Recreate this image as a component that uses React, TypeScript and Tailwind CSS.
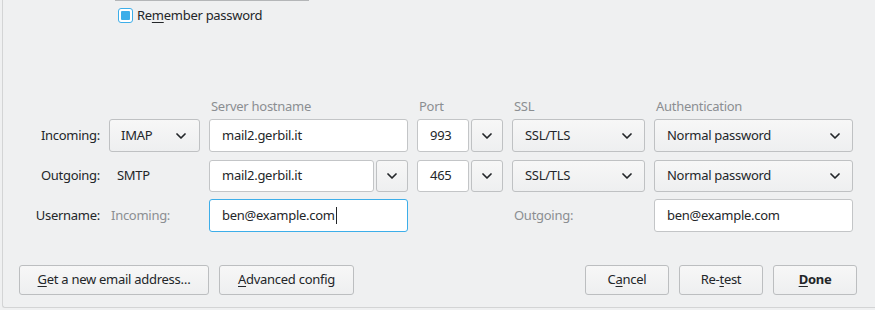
import React from 'react'

const font = { fontFamily: '"Noto Sans", "Open Sans", sans-serif' }

const Chevron = () => (
  <svg width="10" height="6" viewBox="0 0 10 6" fill="none">
    <path d="M1 1l4 4 4-4" stroke="#232629" strokeWidth="1.7" strokeLinecap="round" strokeLinejoin="round" />
  </svg>
)

const Select = ({ value, className = '' }: { value: string; className?: string }) => (
  <div className={`h-full flex items-center justify-between bg-gradient-to-b from-[#f7f7f7] to-[#eeeff0] border border-[#bfc1c3] rounded-[3px] pr-[12px] ${className}`}>
    <span>{value}</span>
    <Chevron />
  </div>
)

const Input = ({ value, focused = false, caret = false }: { value: string; focused?: boolean; caret?: boolean }) => (
  <div className={`h-full flex items-center bg-white rounded-[3px] pl-[12px] border ${focused ? 'border-[#3daee9]' : 'border-[#c3c5c7]'}`}>
    <span>{value}</span>
    {caret && <span className="w-px h-[17px] bg-[#232629] ml-px" />}
  </div>
)

const DropButton = () => (
  <div className="h-full w-[32px] flex items-center justify-center bg-gradient-to-b from-[#f7f7f7] to-[#eeeff0] border border-[#bfc1c3] rounded-[3px]">
    <Chevron />
  </div>
)

const Button = ({ children, className = '' }: { children: React.ReactNode; className?: string }) => (
  <div className={`h-full flex items-center justify-center bg-gradient-to-b from-[#f7f7f7] to-[#eeeff0] border border-[#bcbec0] rounded-[3px] ${className}`}>
    {children}
  </div>
)

const Label = ({ children }: { children: React.ReactNode }) => (
  <div className="flex items-center justify-end">{children}</div>
)

const cols = 'grid grid-cols-[97px_91px_199px_86px_133px_199px] gap-x-[9px]'

export default function App() {
  return (
    <div className="w-[875px] h-[310px] bg-[#eff0f1] pl-[2px] pb-[2px] text-[13px] tracking-[-0.28px] text-[#232629]" style={font}>
      <div className="h-full border-l border-b border-[#d3d4d5] rounded-bl-[3px] flex flex-col">
        <div className="ml-[112px] w-[194px] h-px bg-[#b4b6b8]" />

        <div className="mt-[7px] ml-[115px] h-[15px] flex items-center">
          <div className="w-[15px] h-[15px] rounded-[3px] border border-[#3daee9] bg-white flex items-center justify-center">
            <div className="w-[9px] h-[9px] rounded-[1px] bg-[#3daee9]" />
          </div>
          <span className="ml-[4px]">
            Re<span className="underline underline-offset-2">m</span>ember password
          </span>
        </div>

        <div className={`${cols} mt-[74px] h-[20px] items-center text-[#8b8e91]`}>
          <div />
          <div />
          <div className="pl-[2px]">Server hostname</div>
          <div className="pl-[2px]">Port</div>
          <div className="pl-[2px]">SSL</div>
          <div className="pl-[2px]">Authentication</div>
        </div>

        <div className={`${cols} mt-[2px] h-[33px]`}>
          <Label>Incoming:</Label>
          <Select value="IMAP" className="pl-[11px] pr-[13px]" />
          <Input value="mail2.gerbil.it" />
          <div className="flex gap-[2px]">
            <div className="flex-1"><Input value="993" /></div>
            <DropButton />
          </div>
          <Select value="SSL/TLS" className="pl-[12px]" />
          <Select value="Normal password" className="pl-[12px]" />
        </div>

        <div className={`${cols} mt-[8px] h-[32px]`}>
          <Label>Outgoing:</Label>
          <div className="flex items-center pl-[8px]">SMTP</div>
          <div className="flex gap-[2px]">
            <div className="flex-1"><Input value="mail2.gerbil.it" /></div>
            <DropButton />
          </div>
          <div className="flex gap-[2px]">
            <div className="flex-1"><Input value="465" /></div>
            <DropButton />
          </div>
          <Select value="SSL/TLS" className="pl-[12px]" />
          <Select value="Normal password" className="pl-[12px]" />
        </div>

        <div className={`${cols} mt-[7px] h-[33px]`}>
          <Label>Username:</Label>
          <div className="flex items-center pl-[2px] text-[#8b8e91]">Incoming:</div>
          <Input value="ben@example.com" focused caret />
          <div />
          <div className="flex items-center pl-[2px] text-[#8b8e91]">Outgoing:</div>
          <Input value="ben@example.com" />
        </div>

        <div className="mt-[33px] h-[30px] flex pl-[16px] pr-[18px]">
          <Button className="w-[190px]">
            <span><span className="underline underline-offset-2">G</span>et a new email address…</span>
          </Button>
          <Button className="w-[135px] ml-[10px]">
            <span><span className="underline underline-offset-2">A</span>dvanced config</span>
          </Button>
          <div className="flex-1" />
          <Button className="w-[84px]">
            <span>C<span className="underline underline-offset-2">a</span>ncel</span>
          </Button>
          <Button className="w-[84px] ml-[10px]">
            <span>Re-<span className="underline underline-offset-2">t</span>est</span>
          </Button>
          <Button className="w-[84px] ml-[10px] font-bold">
            <span><span className="underline underline-offset-2">D</span>one</span>
          </Button>
        </div>
      </div>
    </div>
  )
}
